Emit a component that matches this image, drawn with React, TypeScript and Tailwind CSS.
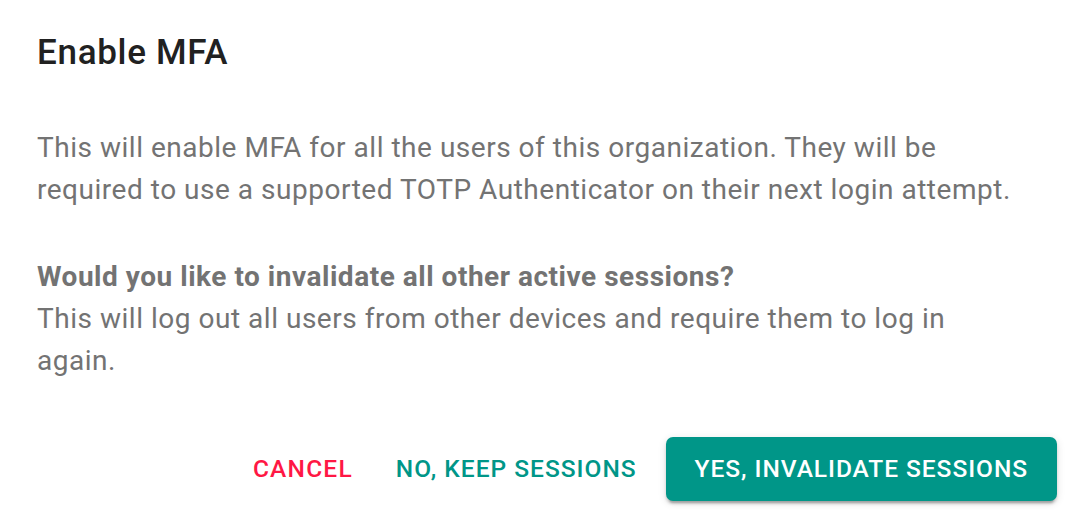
import React from "react";

export default function App() {
  return (
    <div
      className="w-[1070px] h-[510px] bg-white flex flex-col overflow-hidden"
      style={{ fontFamily: "Roboto, 'Liberation Sans', sans-serif" }}
    >
      <h2 className="pt-[25px] px-[37px] text-[35px] leading-[56px] font-medium tracking-[0.7px] text-[#212121]">
        Enable MFA
      </h2>
      <div className="mt-[46px] px-[37px] text-[28px] leading-[42px] tracking-[0.52px] text-[#737373]">
        <p className="whitespace-nowrap">
          This will enable MFA for all the users of this organization. They will be
          <br />
          required to use a supported TOTP Authenticator on their next login attempt.
        </p>
        <p className="mt-[45px] whitespace-nowrap">
          <span className="font-bold">Would you like to invalidate all other active sessions?</span>
          <br />
          This will log out all users from other devices and require them to log in
          <br />
          again.
        </p>
      </div>
      <div className="mt-[55px] flex justify-end items-center gap-[15px] pr-[13px]">
        <button className="h-[64px] px-[14px] rounded-[7px] text-[24.5px] font-medium uppercase tracking-[1.2px] text-[#ff1744]">
          Cancel
        </button>
        <button className="h-[64px] px-[14px] rounded-[7px] text-[24.5px] font-medium uppercase tracking-[1px] text-[#009688]">
          No, keep sessions
        </button>
        <button className="h-[64px] px-[29px] rounded-[7px] text-[24.5px] font-medium uppercase tracking-[0.95px] text-white bg-[#009688] shadow-[0px_5px_2px_-3px_rgba(0,0,0,0.2),0px_3px_3px_0px_rgba(0,0,0,0.14),0px_2px_9px_0px_rgba(0,0,0,0.12)]">
          Yes, invalidate sessions
        </button>
      </div>
    </div>
  );
}
